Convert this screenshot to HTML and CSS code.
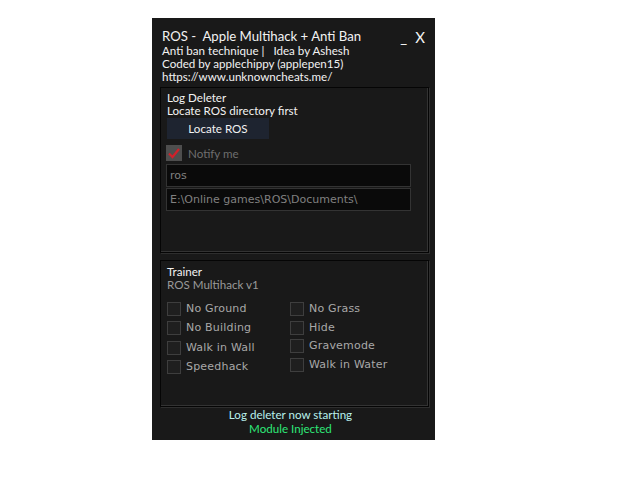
FILE: index.html
```html
<!DOCTYPE html>
<html lang="en">
<head>
    <meta charset="UTF-8">
    <title>ROS - Apple Multihack + Anti Ban</title>
    <link rel="stylesheet" href="styles.css">
</head>
<body>
    <div class="window">
        <div class="header">
            <div class="title">ROS -&nbsp; Apple Multihack + Anti Ban</div>
            <div class="sub">Anti ban technique |&nbsp;&nbsp; Idea by Ashesh</div>
            <div class="sub">Coded by applechippy (applepen15)</div>
            <div class="sub">https://www.unknowncheats.me/</div>
            <div class="controls"><span>_</span><span>X</span></div>
        </div>

        <div class="group group-log">
            <div class="label">Log Deleter</div>
            <div class="label">Locate ROS directory first</div>
            <button class="btn">Locate ROS</button>
            <div class="notify">
                <span class="check-on">
                    <svg width="16" height="16" viewBox="0 0 16 16"><path d="M3 8.5 L6.5 12 L13 4" fill="none" stroke="#d0202a" stroke-width="2.2"/></svg>
                </span>
                <span>Notify me</span>
            </div>
            <div class="field">ros</div>
            <div class="field">E:\Online games\ROS\Documents\</div>
        </div>

        <div class="group group-trainer">
            <div class="label">Trainer</div>
            <div class="label muted">ROS Multihack v1</div>
            <div class="options">
                <div class="col col-a">
                    <div class="opt"><span class="box"></span>No Ground</div>
                    <div class="opt"><span class="box"></span>No Building</div>
                    <div class="opt"><span class="box"></span>Walk in Wall</div>
                    <div class="opt"><span class="box"></span>Speedhack</div>
                </div>
                <div class="col col-b">
                    <div class="opt"><span class="box"></span>No Grass</div>
                    <div class="opt"><span class="box"></span>Hide</div>
                    <div class="opt"><span class="box"></span>Gravemode</div>
                    <div class="opt"><span class="box"></span>Walk in Water</div>
                </div>
            </div>
        </div>

        <div class="status">
            <div class="status-log">Log deleter now starting</div>
            <div class="status-ok">Module Injected</div>
        </div>
    </div>
</body>
</html>
```

FILE: styles.css
```css
body {
    margin: 0;
    background: #fff;
    font-family: Lato, 'Open Sans', sans-serif;
}
.window {
    width: 283px;
    height: 422px;
    margin: 18px 0 0 152px;
    background: #191919;
    color: #f2f2f2;
    box-sizing: border-box;
    padding-top: 10px;
}
.header {
    position: relative;
    padding-left: 10px;
    height: 59px;
}
.title {
    font-size: 13.2px;
    line-height: 16px;
}
.sub {
    font-size: 11.6px;
    line-height: 13px;
}
.controls {
    position: absolute;
    top: 0;
    right: 10px;
    font-size: 15px;
    display: flex;
    gap: 8px;
}
.group {
    width: 269px;
    margin-left: 8px;
    box-sizing: border-box;
    border: 1px solid #050505;
    box-shadow: inset -1px -1px 0 #333, 1px 1px 0 #2e2e2e;
    padding: 3px 6px 0 6px;
}
.group-log {
    height: 166px;
}
.group-trainer {
    height: 147px;
    margin-top: 7px;
    padding-top: 4px;
}
.label {
    font-size: 11.6px;
    line-height: 13px;
}
.muted {
    color: #9a9a9a;
}
.btn {
    display: block;
    width: 102px;
    height: 21px;
    margin: 1px 0 0 0;
    border: none;
    background: #1e2430;
    color: #f2f2f2;
    font-family: inherit;
    font-size: 11.6px;
    padding: 0;
}
.notify {
    display: flex;
    align-items: center;
    gap: 6px;
    margin: 6px 0 3px -1px;
    color: #6e6e6e;
    font-size: 11.6px;
}
.check-on {
    width: 16px;
    height: 16px;
    background: #4e4e4e;
    display: flex;
}
.field {
    width: 245px;
    height: 23px;
    box-sizing: border-box;
    margin-left: -1px;
    margin-bottom: 1px;
    background: #0a0a0a;
    border: 1px solid #333;
    color: #808080;
    font-family: 'DejaVu Sans', Verdana, sans-serif;
    font-size: 11px;
    line-height: 21px;
    padding-left: 3px;
}
.options {
    display: flex;
    margin-top: 11px;
}
.col {
    display: flex;
    flex-direction: column;
}
.col-a {
    width: 123px;
}
.col-a .opt {
    height: 19.4px;
}
.col-b .opt {
    height: 18.7px;
}
.opt {
    display: flex;
    align-items: flex-start;
    gap: 5px;
    color: #a8a8a8;
    font-family: 'DejaVu Sans', Verdana, sans-serif;
    font-size: 11px;
    line-height: 14px;
    letter-spacing: 0.2px;
}
.box {
    width: 14px;
    height: 14px;
    box-sizing: border-box;
    border: 1px solid #3e3e3e;
    background: #1f1f1f;
}
.status {
    text-align: center;
    font-size: 11.6px;
    line-height: 14px;
    margin-top: 1px;
    margin-right: 6px;
}
.status-log {
    color: #b8f0ec;
}
.status-ok {
    color: #2ee878;
}
```
